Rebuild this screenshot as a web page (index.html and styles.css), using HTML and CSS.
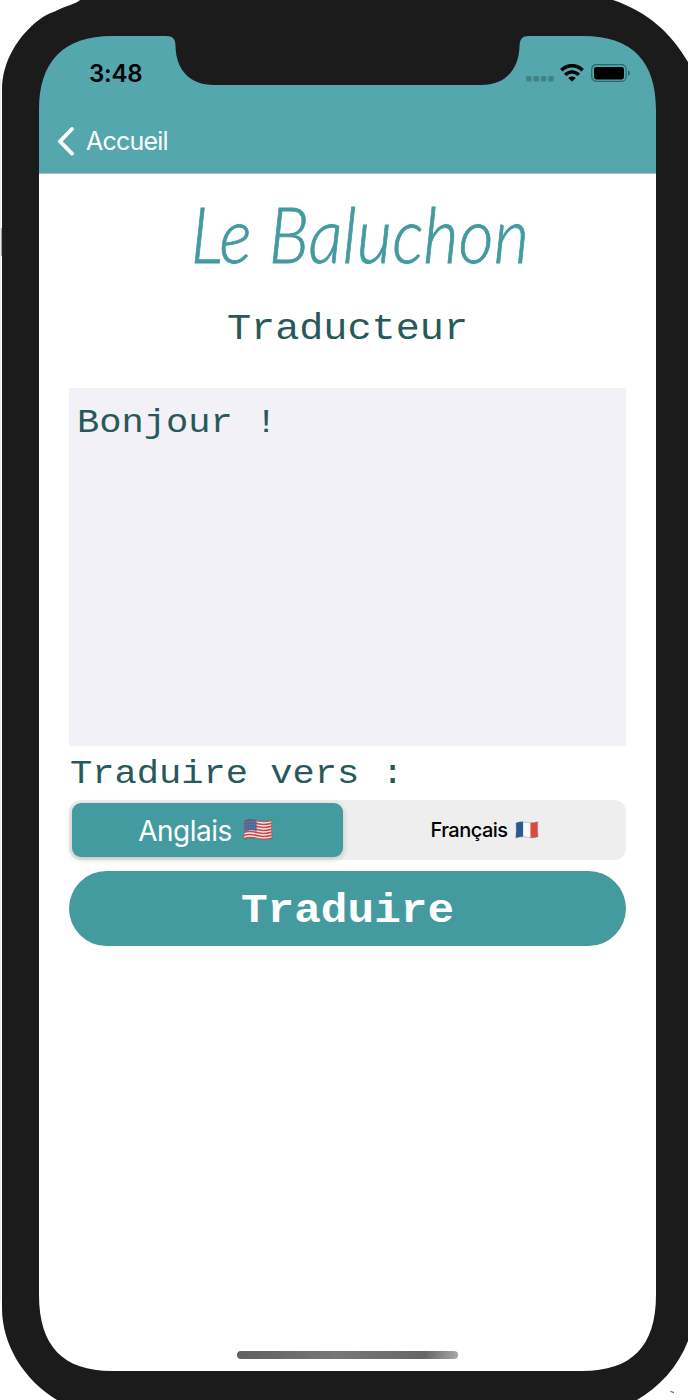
FILE: index.html
```html
<!DOCTYPE html>
<html lang="fr">
<head>
<meta charset="utf-8">
<title>Le Baluchon</title>
<link rel="stylesheet" href="styles.css">
</head>
<body>
<div class="device">
  <div class="screen">
    <header class="header">
      <div class="status">
        <span class="time">3:48</span>
        <div class="indicators">
          <svg class="signal" width="28" height="6" viewBox="0 0 28 6"><rect width="5.6" height="5.6" rx="1.5"/><rect x="7.4" width="5.6" height="5.6" rx="1.5"/><rect x="14.8" width="5.6" height="5.6" rx="1.5"/><rect x="22.2" width="5.6" height="5.6" rx="1.5"/></svg>
          <svg class="wifi" width="24" height="18" viewBox="0 0 24 18"><g fill="none" stroke="#000" stroke-width="3.4"><path d="M1.4 6.3C7.3.2 16.7.2 22.6 6.3"/><path d="M5.2 10.9C9.1 6.8 14.9 6.8 18.8 10.9"/></g><path d="M12 17.6 8.2 14Q12 11.1 15.8 14Z"/></svg>
          <svg class="battery" width="40" height="18" viewBox="0 0 40 18"><rect x=".7" y=".7" width="34.4" height="16.6" rx="4.5" fill="none" stroke="#28696c" stroke-width="1.2"/><rect x="3" y="3" width="30" height="12.4" rx="2.3"/><path d="M37 6.2Q39 7 39 9T37 11.8Z" fill="#28696c"/></svg>
        </div>
      </div>
      <nav class="nav">
        <svg width="18" height="30" viewBox="0 0 18 30"><path d="M15 3 3 15.4 15 27.6" fill="none" stroke="#fff" stroke-width="3.8" stroke-linecap="round" stroke-linejoin="round"/></svg>
        <span class="back">Accueil</span>
      </nav>
    </header>
    <main class="content">
      <h1 class="brand"><span class="brand-text">Le Baluchon</span></h1>
      <h2 class="subtitle"><span class="mono">Traducteur</span></h2>
      <div class="editor"><span class="mono">Bonjour !</span></div>
      <div class="label"><span class="mono">Traduire vers :</span></div>
      <div class="segments">
        <div class="segment selected"><span class="english">Anglais</span>
          <svg class="flag" width="30" height="22" viewBox="0 0 30 22">
            <defs><clipPath id="us"><path d="M1.2 2C7-1 11 .8 15 1.8S24 2.9 28.7.8Q28.1 10 29 19.4C23 21.8 19 20.2 15 19.6S6 18.5.8 20.7Q1.7 11 1.2 2Z"/></clipPath></defs>
            <g clip-path="url(#us)"><rect width="30" height="22" fill="#f5e9e8"/><g fill="none" stroke="#c8474b" stroke-width="1.6"><path d="M0 1.8C7-1 11 .8 15 1.8S24 3 30 .8"/><path d="M0 4.8C7 2 11 3.8 15 4.8S24 6 30 3.8"/><path d="M0 7.8C7 5 11 6.8 15 7.8S24 9 30 6.8"/><path d="M0 10.8C7 8 11 9.8 15 10.8S24 12 30 9.8"/><path d="M0 13.8C7 11 11 12.8 15 13.8S24 15 30 12.8"/><path d="M0 16.8C7 14 11 15.8 15 16.8S24 18 30 15.8"/><path d="M0 20C7 17.2 11 19 15 19.7S24 21 30 18.8"/></g><path d="M0 0H13.5V12Q7 10 0 13Z" fill="#4d6798"/><path d="M2 4Q7 2 13 3M2 7Q7 5 13 6M2 10Q7 8 13 9" fill="none" stroke="#8fa0c2" stroke-width=".7" stroke-dasharray="1 1.3"/></g>
            <path d="M1.2 2C7-1 11 .8 15 1.8S24 2.9 28.7.8Q28.1 10 29 19.4C23 21.8 19 20.2 15 19.6S6 18.5.8 20.7Q1.7 11 1.2 2Z" fill="none" stroke="#704951" stroke-opacity=".6" stroke-width=".7"/>
          </svg>
        </div>
        <div class="segment"><span class="french">Français</span>
          <svg class="flag" width="24" height="18" viewBox="0 0 24 18">
            <defs><clipPath id="fr"><path d="M1 2C5 .2 9 .8 12 1.4S19 2 22.8.8Q22.2 8 23 15.8C19 17.4 15 16.8 12 16.2S5 15.5.8 17Q1.5 9 1 2Z"/></clipPath></defs>
            <g clip-path="url(#fr)"><path d="M0 0H8.3V18H0Z" fill="#285995"/><path d="M8.3 0H15.5V18H8.3Z" fill="#f8f8f8"/><path d="M15.5 0H24V18H15.5Z" fill="#dc493d"/></g>
            <path d="M1 2C5 .2 9 .8 12 1.4S19 2 22.8.8Q22.2 8 23 15.8C19 17.4 15 16.8 12 16.2S5 15.5.8 17Q1.5 9 1 2Z" fill="none" stroke="#777" stroke-opacity=".55" stroke-width=".7"/>
          </svg>
        </div>
      </div>
      <button class="submit"><span class="mono">Traduire</span></button>
    </main>
    <div class="home"></div>
  </div>
  <svg class="bezel" width="688" height="1400" viewBox="0 0 688 1400">
    <path fill="#1b1b1b" fill-rule="evenodd" d="M80 0C76 4 65 6 60 9C52 13 49 13 43 17C18 34 2 62 2 90V1308C2 1345 24 1380 57 1400H637C659 1387 678 1367 688 1341V62C671 33 648 12 613 0ZM39 110C39 62 63 36 112 36H166C173 36 175.5 39 175.5 46C176 70 190 85 214 85H481C505 85 519 70 519.5 46C520 39 522 36 529 36H583C633 36 656 62 656 110V1295C656 1346 632 1371 582 1371H112C63 1371 39 1346 39 1295Z"/>
    <path d="M.5 78V1300" stroke="#ddd" fill="none" stroke-width=".6"/>
    <path d="M1.7 228V256" stroke="#555" fill="none" stroke-width=".7"/>
    <path d="M670.5 1391.5L674 1392.5" stroke="#444" fill="none"/>
  </svg>
</div>
</body>
</html>
```
FILE: styles.css
```css
* { box-sizing: border-box; }
body { margin: 0; background: #fff; font-family: Inter, sans-serif; }
.device { position: relative; width: 688px; height: 1400px; padding: 36px 32px 29px 39px; overflow: hidden; }
.screen { display: flex; flex-direction: column; height: 1335px; background: #fff; }
.header { height: 138px; background: #53a7ad; border-bottom: 1px solid #a9bfc1; }
.status { display: flex; justify-content: space-between; height: 74px; padding: 23px 25px 0 50px; }
.time { font-size: 24px; line-height: 30px; font-weight: 600; letter-spacing: -.2px; }
.indicators { display: flex; align-items: flex-start; padding-top: 5px; }
.signal { margin-top: 12px; margin-right: 6px; fill: #438388; }
.wifi { margin-right: 7px; }
.nav { display: flex; align-items: center; height: 60px; padding: 1px 0 0 18px; gap: 11px; }
.back { color: #fff; font-size: 25px; line-height: 30px; letter-spacing: -.8px; }
.content { display: flex; flex-direction: column; padding: 0 30px; }
.brand { display: flex; justify-content: center; height: 122px; margin: 0; padding-left: 24px; font-family: Lato, sans-serif; font-size: 76px; line-height: 120px; font-weight: 300; font-style: italic; color: #439a9f; white-space: nowrap; }
.brand-text { transform: scaleX(.9); -webkit-text-stroke: .8px #439a9f; }
.mono { display: inline-block; transform: scaleY(.9); transform-origin: 50% 78%; }
.subtitle { height: 92px; margin: 0; padding-top: 9px; text-align: center; font: 400 40.2px/48px "Liberation Mono", monospace; color: #28595a; }
.editor { height: 358px; padding: 12px 8px; background: #f2f1f7; color: #28595a; font: 37.1px/44px "Liberation Mono", monospace; }
.label { height: 54px; padding: 5px 0 0 1px; color: #28595a; font: 37.1px/44px "Liberation Mono", monospace; white-space: pre; }
.segments { display: flex; height: 60px; padding: 3px; border-radius: 12px; background: #eee; }
.segment { display: flex; flex: 1; align-items: center; justify-content: center; gap: 7px; color: #000; }
.segment.selected { flex: 0 0 271px; gap: 11px; padding-right: 4px; background: #439a9f; color: #fff; border-radius: 9px; box-shadow: 0 2px 6px #0003; }
.flag { flex: none; }
.english { font-size: 28px; line-height: 32px; letter-spacing: -.5px; padding-top: 1px; }
.french { font-size: 20px; font-weight: 450; letter-spacing: -.5px; }
.segment:not(.selected) { padding-left: 3px; }
.submit { height: 75px; margin: 11px 0 0; padding: 2px 0 0; border: 0; border-radius: 38px; background: #439a9f; color: #fff; font: 700 44.4px/71px "Liberation Mono", monospace; }
.home { width: 221px; height: 8px; margin: auto 0 12px 198px; border-radius: 4px; background: linear-gradient(100deg, #606060, #777 45%, #666 85%, #aaa); }
.bezel { position: absolute; top: 0; left: 0; pointer-events: none; }
```
